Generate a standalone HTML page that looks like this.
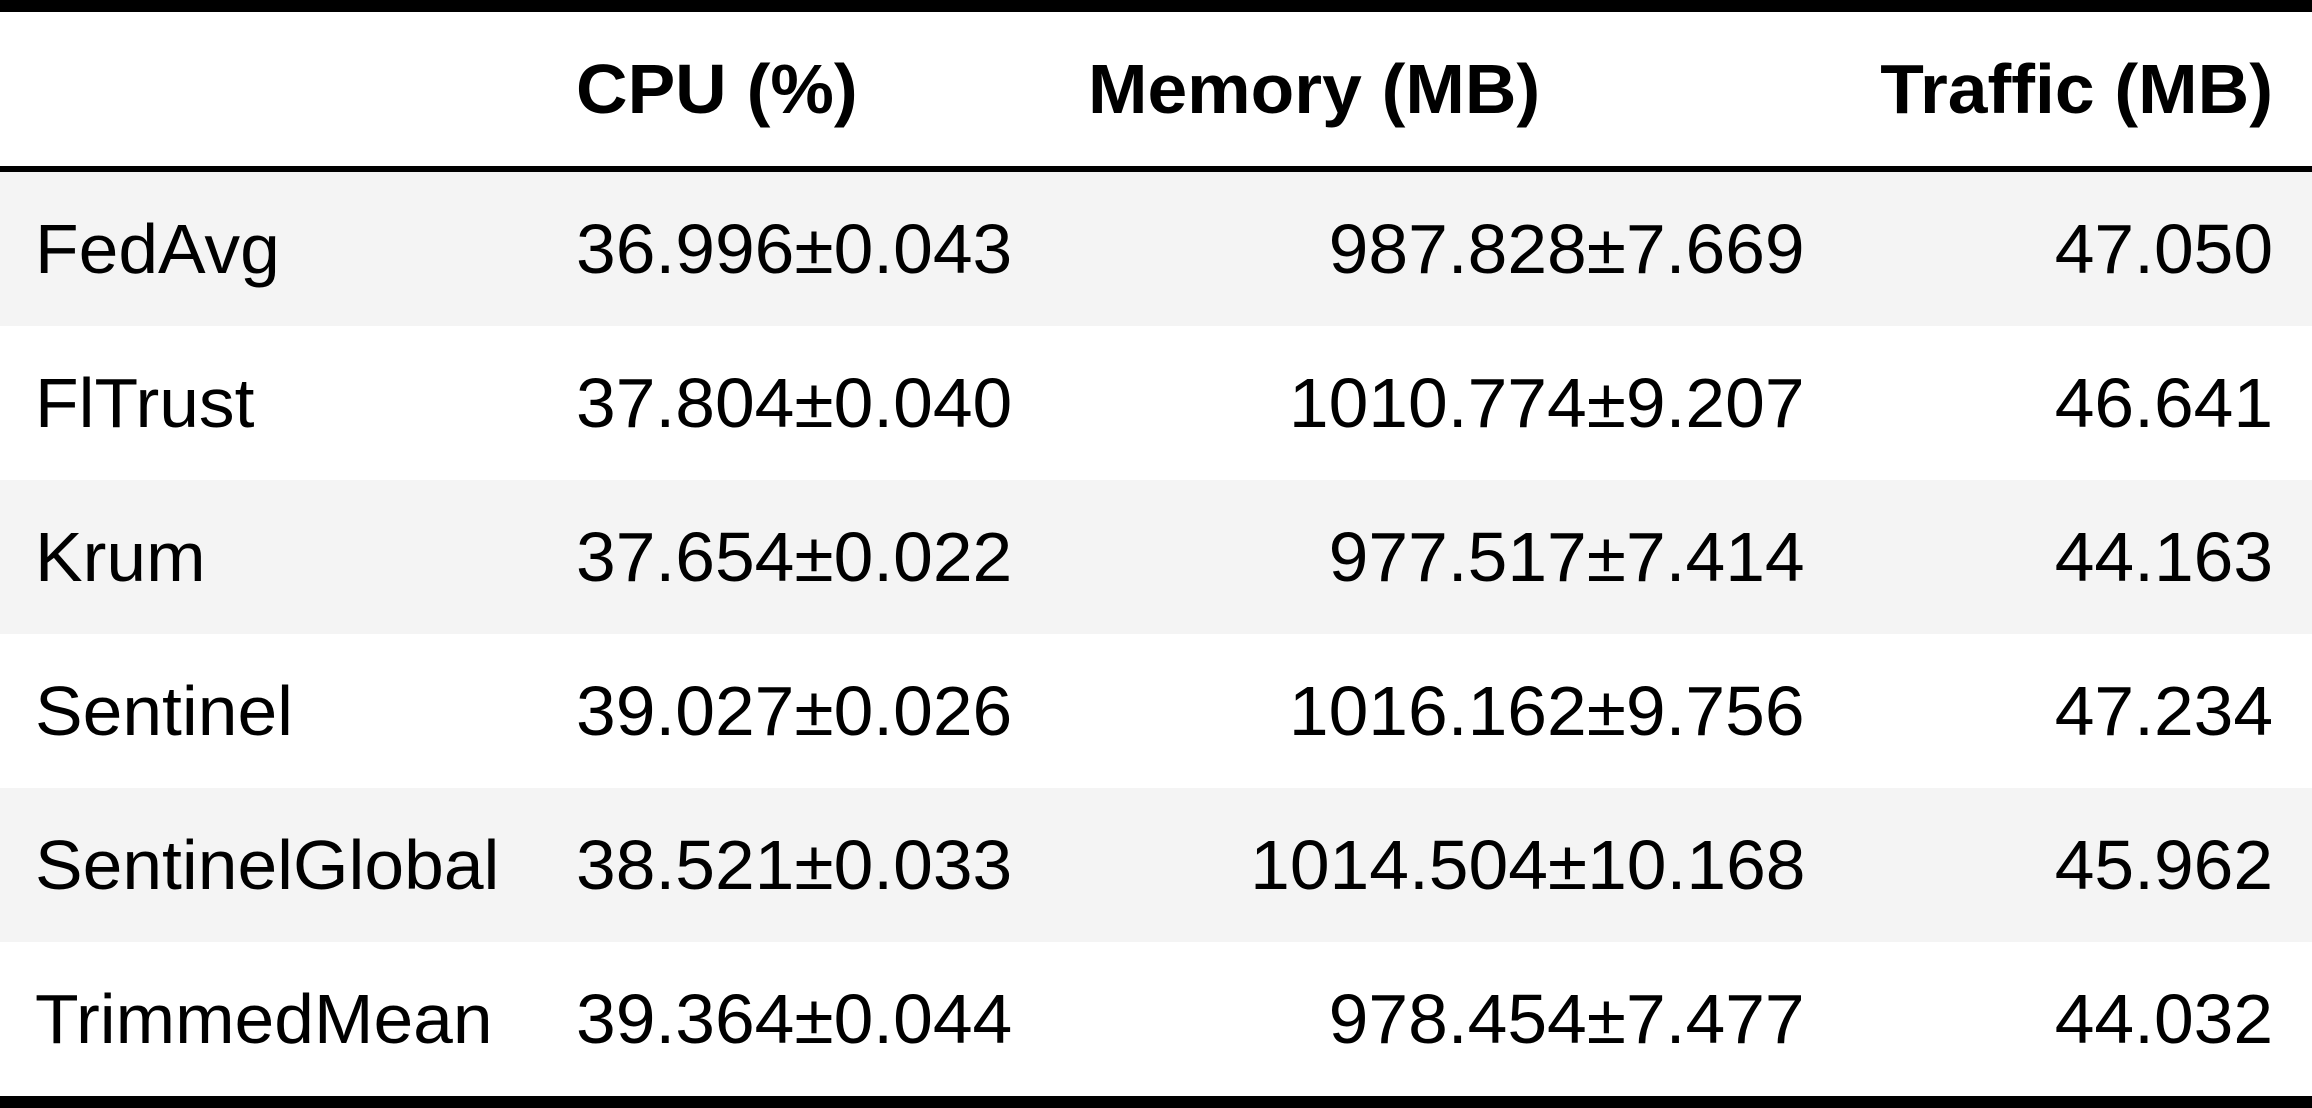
<!DOCTYPE html>
<html><head><meta charset="utf-8"><style>
html,body{margin:0;padding:0;width:2312px;height:1108px;background:#fff;overflow:hidden;position:relative;font-family:"Liberation Sans",Arial,sans-serif;color:#000}
.bar{position:absolute;left:0;width:2312px;background:#000}
.bg{position:absolute;left:0;width:2312px;height:154px;background:#f4f4f4}
.t{position:absolute;font-size:70px;line-height:1;white-space:nowrap;transform:scaleX(1.02)}
.l{transform-origin:left center}
.r{transform-origin:right center;text-align:right}
.b{font-weight:bold}
</style></head><body>
<div class="bar" style="top:0;height:12px"></div>
<div class="bar" style="top:166px;height:6px"></div>
<div class="bg" style="top:172px"></div>
<div class="bg" style="top:480px"></div>
<div class="bg" style="top:788px"></div>
<div class="bar" style="top:1096px;height:12px"></div>

<div class="t l b" style="left:576px;top:54px">CPU (%)</div>
<div class="t l b" style="left:1088px;top:54px">Memory (MB)</div>
<div class="t r b" style="right:39px;top:54px">Traffic (MB)</div>

<div class="t l" style="left:35px;top:214px">FedAvg</div>
<div class="t l" style="left:576px;top:214px">36.996±0.043</div>
<div class="t r" style="right:507px;top:214px">987.828±7.669</div>
<div class="t r" style="right:39px;top:214px">47.050</div>

<div class="t l" style="left:35px;top:368px">FlTrust</div>
<div class="t l" style="left:576px;top:368px">37.804±0.040</div>
<div class="t r" style="right:507px;top:368px">1010.774±9.207</div>
<div class="t r" style="right:39px;top:368px">46.641</div>

<div class="t l" style="left:35px;top:522px">Krum</div>
<div class="t l" style="left:576px;top:522px">37.654±0.022</div>
<div class="t r" style="right:507px;top:522px">977.517±7.414</div>
<div class="t r" style="right:39px;top:522px">44.163</div>

<div class="t l" style="left:35px;top:676px">Sentinel</div>
<div class="t l" style="left:576px;top:676px">39.027±0.026</div>
<div class="t r" style="right:507px;top:676px">1016.162±9.756</div>
<div class="t r" style="right:39px;top:676px">47.234</div>

<div class="t l" style="left:35px;top:830px">SentinelGlobal</div>
<div class="t l" style="left:576px;top:830px">38.521±0.033</div>
<div class="t r" style="right:507px;top:830px">1014.504±10.168</div>
<div class="t r" style="right:39px;top:830px">45.962</div>

<div class="t l" style="left:35px;top:984px">TrimmedMean</div>
<div class="t l" style="left:576px;top:984px">39.364±0.044</div>
<div class="t r" style="right:507px;top:984px">978.454±7.477</div>
<div class="t r" style="right:39px;top:984px">44.032</div>
</body></html>
